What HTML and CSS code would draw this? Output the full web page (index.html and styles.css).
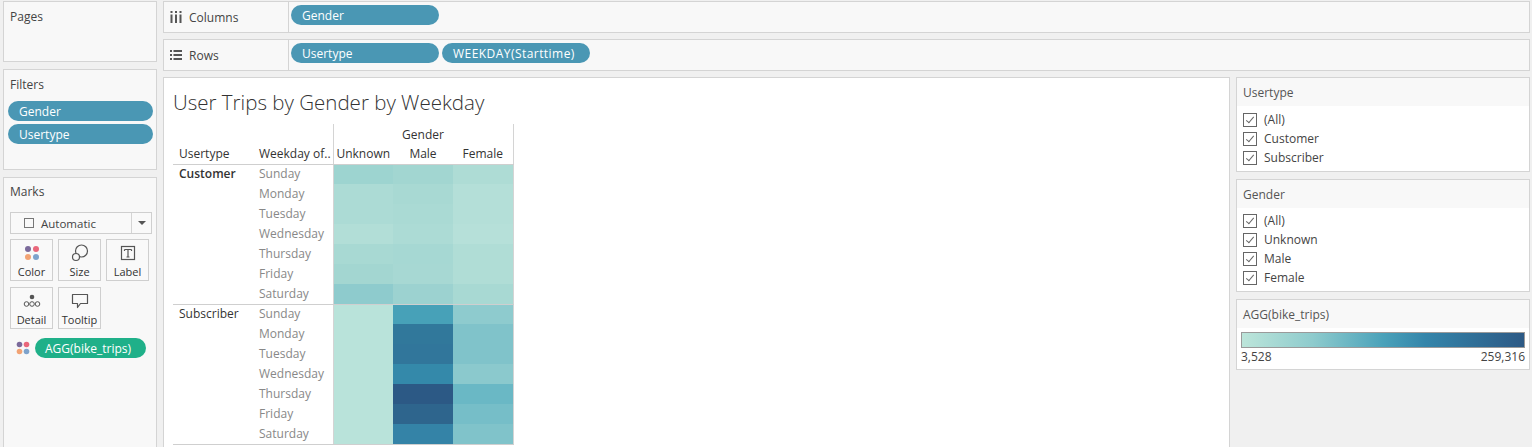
FILE: index.html
```html
<!DOCTYPE html>
<html>
<head>
<meta charset="utf-8">
<link rel="stylesheet" href="styles.css">
</head>
<body>
<div class="app">
  <aside class="side">
    <section class="card pages"><div class="card-title">Pages</div></section>
    <section class="card filters">
      <div class="card-title">Filters</div>
      <div class="pill blue">Gender</div>
      <div class="pill blue">Usertype</div>
    </section>
    <section class="card marks">
      <div class="card-title">Marks</div>
      <div class="dropdown">
        <span class="dd-main"><span class="dd-box"></span>Automatic</span>
        <span class="dd-arrow"></span>
      </div>
      <div class="mark-grid">
        <div class="mbtn">
          <svg width="16" height="16" viewBox="0 0 16 16"><circle cx="4" cy="4" r="3" fill="#7b6a9b"/><circle cx="12" cy="4" r="3" fill="#e9677b"/><circle cx="4" cy="12" r="3" fill="#f2a374"/><circle cx="12" cy="12" r="3" fill="#7ea3cc"/></svg>
          <span>Color</span>
        </div>
        <div class="mbtn">
          <svg width="18" height="18" viewBox="0 0 18 18"><circle cx="10.5" cy="7" r="6" fill="none" stroke="#555" stroke-width="1.2"/><circle cx="5" cy="13" r="3.5" fill="#f9f9f9" stroke="#555" stroke-width="1.2"/></svg>
          <span>Size</span>
        </div>
        <div class="mbtn">
          <svg width="16" height="16" viewBox="0 0 16 16"><rect x="1.5" y="1.5" width="13" height="13" fill="none" stroke="#555" stroke-width="1.2"/><path d="M4.5 4.5h7M8 4.5v7.5M4.5 4.5v1.5M11.5 4.5v1.5M6.5 12h3" fill="none" stroke="#555" stroke-width="1.2"/></svg>
          <span>Label</span>
        </div>
        <div class="mbtn">
          <svg width="18" height="16" viewBox="0 0 18 16"><circle cx="9" cy="4" r="2.3" fill="#555"/><circle cx="3.5" cy="11" r="2.3" fill="none" stroke="#555" stroke-width="1"/><circle cx="9" cy="11" r="2.3" fill="none" stroke="#555" stroke-width="1"/><circle cx="14.5" cy="11" r="2.3" fill="none" stroke="#555" stroke-width="1"/></svg>
          <span>Detail</span>
        </div>
        <div class="mbtn">
          <svg width="18" height="18" viewBox="0 0 18 18"><path d="M1.5 2.5h15v9h-7l-3 4v-4h-5z" fill="none" stroke="#555" stroke-width="1.2" stroke-linejoin="round"/></svg>
          <span>Tooltip</span>
        </div>
      </div>
      <div class="mark-field">
        <svg width="14" height="14" viewBox="0 0 14 14"><circle cx="3.5" cy="3.5" r="2.8" fill="#7b6a9b"/><circle cx="10.5" cy="3.5" r="2.8" fill="#e9677b"/><circle cx="3.5" cy="10.5" r="2.8" fill="#f2a374"/><circle cx="10.5" cy="10.5" r="2.8" fill="#7ea3cc"/></svg>
        <span class="pill green">AGG(bike_trips)</span>
      </div>
    </section>
  </aside>

  <main class="main">
    <div class="shelf">
      <div class="shelf-label">
        <svg width="12" height="12" viewBox="0 0 12 12"><rect x="0.5" y="0" width="2" height="2" fill="#555"/><rect x="0.5" y="3.5" width="2" height="8.5" fill="#555"/><rect x="5" y="0" width="2" height="2" fill="#555"/><rect x="5" y="3.5" width="2" height="8.5" fill="#555"/><rect x="9.5" y="0" width="2" height="2" fill="#555"/><rect x="9.5" y="3.5" width="2" height="8.5" fill="#555"/></svg>
        <span>Columns</span>
      </div>
      <div class="shelf-pills"><span class="pill blue shelf-pill">Gender</span></div>
    </div>
    <div class="shelf">
      <div class="shelf-label">
        <svg width="12" height="12" viewBox="0 0 12 12"><rect x="0" y="1" width="2" height="2" fill="#555"/><rect x="3.5" y="1" width="8.5" height="2" fill="#555"/><rect x="0" y="5" width="2" height="2" fill="#555"/><rect x="3.5" y="5" width="8.5" height="2" fill="#555"/><rect x="0" y="9" width="2" height="2" fill="#555"/><rect x="3.5" y="9" width="8.5" height="2" fill="#555"/></svg>
        <span>Rows</span>
      </div>
      <div class="shelf-pills"><span class="pill blue shelf-pill">Usertype</span><span class="pill blue shelf-pill caps">WEEKDAY(Starttime)</span></div>
    </div>

    <div class="content">
      <div class="view">
        <h1 class="title">User Trips by Gender by Weekday</h1>
        <table class="xt">
          <thead>
            <tr class="h1"><th class="rh"></th><th class="rh"></th><th colspan="3" class="gh">Gender</th></tr>
            <tr class="h2"><th class="rh">Usertype</th><th class="rh">Weekday of..</th><th class="c1">Unknown</th><th>Male</th><th class="c3">Female</th></tr>
          </thead>
          <tbody>
            <tr><td class="ut" rowspan="7">Customer</td><td class="wd">Sunday</td><td class="c1" style="background:#9dd4d0"></td><td style="background:#a2d6d1"></td><td class="c3" style="background:#aedcd5"></td></tr>
            <tr><td class="wd">Monday</td><td class="c1" style="background:#acdbd5"></td><td style="background:#a8d9d3"></td><td class="c3" style="background:#b4dfd8"></td></tr>
            <tr><td class="wd">Tuesday</td><td class="c1" style="background:#acdbd5"></td><td style="background:#aadad4"></td><td class="c3" style="background:#b4dfd8"></td></tr>
            <tr><td class="wd">Wednesday</td><td class="c1" style="background:#b2ded7"></td><td style="background:#acdbd5"></td><td class="c3" style="background:#b6e0d9"></td></tr>
            <tr><td class="wd">Thursday</td><td class="c1" style="background:#a8d9d3"></td><td style="background:#a6d8d3"></td><td class="c3" style="background:#b0ddd6"></td></tr>
            <tr><td class="wd">Friday</td><td class="c1" style="background:#a3d6d1"></td><td style="background:#a7d8d3"></td><td class="c3" style="background:#b0ddd6"></td></tr>
            <tr class="last"><td class="wd">Saturday</td><td class="c1" style="background:#8ecbcd"></td><td style="background:#9cd2d0"></td><td class="c3" style="background:#a8d9d3"></td></tr>
          </tbody>
          <tbody>
            <tr><td class="ut sub" rowspan="7">Subscriber</td><td class="wd">Sunday</td><td class="c1" style="background:#b9e3da"></td><td style="background:#47a1b8"></td><td class="c3" style="background:#8ecbce"></td></tr>
            <tr><td class="wd">Monday</td><td class="c1" style="background:#b9e3da"></td><td style="background:#31789b"></td><td class="c3" style="background:#80c3ca"></td></tr>
            <tr><td class="wd">Tuesday</td><td class="c1" style="background:#b9e3da"></td><td style="background:#31769b"></td><td class="c3" style="background:#80c3ca"></td></tr>
            <tr><td class="wd">Wednesday</td><td class="c1" style="background:#b9e3da"></td><td style="background:#3489aa"></td><td class="c3" style="background:#8bc9cd"></td></tr>
            <tr><td class="wd">Thursday</td><td class="c1" style="background:#b9e3da"></td><td style="background:#2c5985"></td><td class="c3" style="background:#6ab8c5"></td></tr>
            <tr><td class="wd">Friday</td><td class="c1" style="background:#b9e3da"></td><td style="background:#2e658d"></td><td class="c3" style="background:#76bec8"></td></tr>
            <tr class="last"><td class="wd">Saturday</td><td class="c1" style="background:#b9e3da"></td><td style="background:#3483a7"></td><td class="c3" style="background:#80c3ca"></td></tr>
          </tbody>
        </table>
      </div>

      <div class="legends">
        <section class="lcard ut-card">
          <div class="lhead">Usertype</div>
          <ul class="checks">
            <li><span class="cb"></span>(All)</li>
            <li><span class="cb"></span>Customer</li>
            <li><span class="cb"></span>Subscriber</li>
          </ul>
        </section>
        <section class="lcard g-card">
          <div class="lhead">Gender</div>
          <ul class="checks">
            <li><span class="cb"></span>(All)</li>
            <li><span class="cb"></span>Unknown</li>
            <li><span class="cb"></span>Male</li>
            <li><span class="cb"></span>Female</li>
          </ul>
        </section>
        <section class="lcard agg-card">
          <div class="lhead">AGG(bike_trips)</div>
          <div class="grad"></div>
          <div class="grad-labels"><span>3,528</span><span>259,316</span></div>
        </section>
      </div>
    </div>
  </main>
</div>
</body>
</html>
```
FILE: styles.css
```css
* { box-sizing: border-box; }
html, body { margin: 0; padding: 0; }
body {
  background: #f0f0f0;
  font-family: "Open Sans", "Noto Sans", sans-serif;
  font-size: 12px;
  color: #333;
  overflow: hidden;
}
.app {
  display: grid;
  grid-template-columns: 154px 1fr;
  column-gap: 6px;
  padding: 1px 2px 0 3px;
  height: 100vh;
}
.side {
  display: flex;
  flex-direction: column;
  gap: 7px;
}
.card {
  background: #f8f8f8;
  border: 1px solid #d4d4d4;
}
.card-title {
  color: #444;
  padding: 7px 6px 0;
  height: 26px;
  line-height: 16px;
}
.pages { height: 61px; }
.filters { height: 101px; }
.marks { height: 300px; }

.pill {
  display: flex;
  align-items: center;
  height: 20px;
  border-radius: 10px;
  color: #fff;
  padding-left: 11px;
  white-space: nowrap;
}
.blue { background: #4a97b4; }
.green { background: #1fb089; }
.filters .pill { margin: 0 3px 3px 4px; }
.filters .card-title { height: 31px; padding-top: 7px; }

.marks .card-title { height: 34px; padding-top: 6px; }
.dropdown {
  margin: 0 4px 0 6px;
  height: 22px;
  border: 1px solid #cfcfcf;
  background: #f9f9f9;
  display: flex;
  align-items: stretch;
}
.dd-main {
  flex: 1;
  display: flex;
  align-items: center;
  padding-left: 13px;
  color: #444;
  font-size: 11.5px;
  border-right: 1px solid #d4d4d4;
}
.dd-box {
  width: 10px; height: 10px;
  border: 1px solid #777;
  margin-right: 7px;
}
.dd-arrow {
  width: 19px;
  position: relative;
}
.dd-arrow::after {
  content: "";
  position: absolute;
  left: 6px; top: 8px;
  border-left: 4px solid transparent;
  border-right: 4px solid transparent;
  border-top: 4px solid #555;
}
.mark-grid {
  display: grid;
  grid-template-columns: repeat(3, 43px);
  grid-auto-rows: 42px;
  column-gap: 5px;
  row-gap: 6px;
  margin: 5px 0 0 6px;
}
.mbtn {
  border: 1px solid #cfcfcf;
  background: #f9f9f9;
  display: flex;
  flex-direction: column;
  align-items: center;
  justify-content: flex-start;
  padding-top: 4px;
  color: #333;
  font-size: 11px;
}
.mbtn svg { height: 18px; flex: none; }
.mbtn span { margin-top: 3px; line-height: 14px; }
.mark-field {
  display: flex;
  align-items: center;
  gap: 5px;
  margin: 9px 0 0 12px;
}
.mark-field .pill { width: 111px; padding-left: 10px; font-size: 12px; }

.main {
  display: flex;
  flex-direction: column;
  gap: 6px;
  min-width: 0;
}
.shelf {
  height: 32px;
  flex: none;
  display: flex;
  background: #f8f8f8;
  border: 1px solid #d4d4d4;
}
.shelf-label {
  width: 125px;
  border-right: 1px solid #d4d4d4;
  display: flex;
  align-items: center;
  gap: 7px;
  padding-left: 6px;
  color: #444;
}
.shelf-pills {
  display: flex;
  gap: 3px;
  padding: 3px 0 0 2px;
}
.shelf-pill { width: 148px; height: 20px; }
.shelf-pill.caps { letter-spacing: 0.45px; }

.content {
  flex: 1;
  display: grid;
  grid-template-columns: 1fr 294px;
  column-gap: 6px;
  min-height: 0;
}
.view {
  background: #fff;
  border: 1px solid #d4d4d4;
  border-bottom: none;
  padding: 10px 0 0 9px;
}
.title {
  margin: 0;
  font-weight: 300;
  font-size: 20.5px;
  line-height: 28px;
  color: #333;
  height: 36px;
}
.xt {
  border-collapse: collapse;
  table-layout: fixed;
}
.xt th, .xt td {
  padding: 0;
  height: 20px;
  font-weight: normal;
  white-space: nowrap;
  line-height: 18px;
}
.xt th.rh, .xt td.ut, .xt td.wd { width: 80px; text-align: left; padding-left: 6px; }
.xt th { text-align: center; color: #333; width: 60px; }
.xt .h1 th { vertical-align: bottom; }
.xt .h1 .gh { border-left: 1px solid #d4d4d4; border-right: 1px solid #d4d4d4; }
.xt .h2 th { border-bottom: 1px solid #cfcfcf; }
.xt .c1 { border-left: 1px solid #d4d4d4; }
.xt .c3 { border-right: 1px solid #d4d4d4; }
.xt td.ut { vertical-align: top; font-weight: 600; color: #333; }
.xt td.ut.sub { font-weight: normal; color: #333; }
.xt td.wd { color: #888; }
.xt tr.last td { border-bottom: 1px solid #cfcfcf; }
.xt td.ut { border-bottom: 1px solid #cfcfcf; }

.legends {
  display: flex;
  flex-direction: column;
  gap: 7px;
}
.lcard {
  background: #fff;
  border: 1px solid #d4d4d4;
}
.lhead {
  background: #f8f8f8;
  height: 28px;
  padding: 8px 0 0 6px;
  color: #555;
  line-height: 14px;
}
.ut-card { height: 95px; }
.g-card { height: 113px; }
.agg-card { height: 71px; }
.checks {
  list-style: none;
  margin: 0;
  padding: 3px 0 0 6px;
}
.ut-card .checks { padding-top: 4px; }
.checks li {
  height: 19px;
  display: flex;
  align-items: center;
  color: #444;
}
.cb {
  width: 14px; height: 14px;
  border: 1px solid #666;
  margin-right: 7px;
  position: relative;
  background: #fff;
}
.cb::after {
  content: "";
  position: absolute;
  left: 4px; top: 1px;
  width: 3px; height: 7px;
  border-right: 1.5px solid #666;
  border-bottom: 1.5px solid #666;
  transform: rotate(40deg);
}
.grad {
  margin: 4px 4px 0 4px;
  height: 16px;
  border: 1px solid #9a9a9a;
  background: linear-gradient(to right, #bce5da 0%, #8ecbcd 25%, #4aa2ba 50%, #3485aa 65%, #2c5985 100%);
}
.grad-labels {
  display: flex;
  justify-content: space-between;
  padding: 1px 4px 0 4px;
  color: #444;
  line-height: 16px;
}
```
